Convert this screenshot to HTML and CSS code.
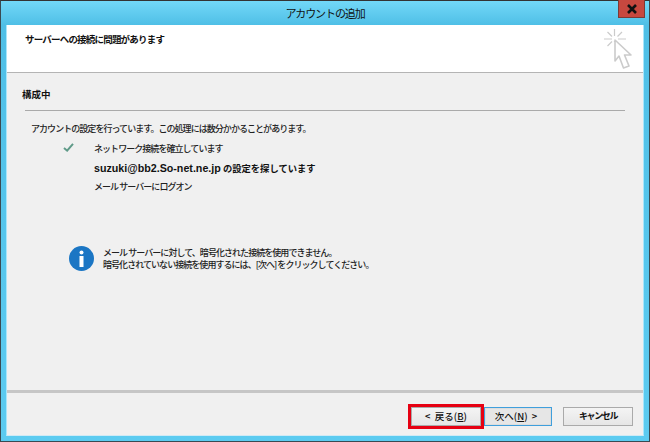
FILE: index.html
```html
<!DOCTYPE html>
<html lang="ja">
<head>
<meta charset="utf-8">
<title>アカウントの追加</title>
<link rel="stylesheet" href="styles.css">
</head>
<body>
<div class="window">
  <div class="titlebar">
    <span class="title">アカウントの追加</span>
    <button class="close" aria-label="閉じる">
      <svg width="12" height="10" viewBox="0 0 12 10"><path d="M2 1l8 8M10 1l-8 8" stroke="#111" stroke-width="2.600" fill="none"/></svg>
    </button>
  </div>
  <div class="client">
    <header class="head">
      <h1 class="head-title">サーバーへの接続に問題があります</h1>
      <svg class="wizard" width="28" height="40" viewBox="0 0 28 40">
        <path d="M10.500 0v7M10.500 12v1M0 10h8M14 10h8M3.500 3l4.500 4.500M18 3l-4.500 4.500M3.500 17l4.500-4.500" stroke="#cbcbcb" stroke-width="1.200" fill="none"/>
        <path d="M11 11v21l4-5 4.500 12 5.500-2-4.500-11h6.500z" fill="#fff" stroke="#cbcbcb" stroke-width="1.600" stroke-linejoin="round"/>
      </svg>
    </header>
    <main class="body">
      <h2 class="section">構成中</h2>
      <p class="lead">アカウントの設定を行っています。この処理には数分かかることがあります。</p>
      <ul class="steps">
        <li class="step">
          <svg class="check" width="11" height="9" viewBox="0 0 12 10"><path d="M1 5.500l3.500 3L11 1" stroke="#5f9a88" stroke-width="2.200" fill="none"/></svg>
          <span>ネットワーク接続を確立しています</span>
        </li>
        <li class="step current"><span class="mail">suzuki@bb2.So-net.ne.jp</span> の設定を探しています</li>
        <li class="step"><span>メール サーバーにログオン</span></li>
      </ul>
      <div class="notice">
        <svg class="info" width="25" height="25" viewBox="0 0 25 25">
          <circle cx="12.500" cy="12.500" r="12.500" fill="#1b76c4"/>
          <circle cx="12.500" cy="6.500" r="2" fill="#fff"/>
          <rect x="10.500" y="10" width="4" height="11" fill="#fff"/>
        </svg>
        <p class="notice-text">メール サーバーに対して、暗号化された接続を使用できません。<br>暗号化されていない接続を使用するには、[次へ] をクリックしてください。</p>
      </div>
    </main>
    <footer class="foot">
      <button class="btn back">&lt;&nbsp; 戻る(<u>B</u>)</button>
      <button class="btn next">次へ(<u>N</u>)&nbsp; &gt;</button>
      <button class="btn cancel">キャンセル</button>
    </footer>
  </div>
</div>
</body>
</html>
```
FILE: styles.css
```css
* { box-sizing: border-box; }
html, body { margin: 0; padding: 0; }
body {
  width: 650px;
  height: 442px;
  overflow: hidden;
  font-family: "Noto Sans CJK JP", "Liberation Sans", sans-serif;
  font-size: 9px;
  letter-spacing: -0.95px;
  font-weight: 500;
  color: #222;
}
.window {
  width: 650px;
  height: 442px;
  display: flex;
  flex-direction: column;
  border: 1px solid #3a4a52;
  border-top-color: #333;
  background: linear-gradient(180deg, #72d8f8 0, #4fbfe6 24px, #58c8ee 300px, #5ccbf0 100%);
  padding: 0 5px 5px 5px;
}
.titlebar {
  height: 24px;
  flex: none;
  display: flex;
  align-items: center;
  justify-content: center;
  position: relative;
}
.title { font-size: 11px; letter-spacing: -1.1px; font-weight: 400; color: #111; }
.close {
  position: absolute;
  top: -1px;
  right: -1px;
  width: 27px;
  height: 18px;
  margin: 0;
  padding: 0;
  display: flex;
  align-items: center;
  justify-content: center;
  background: #c7483f;
  border: 1px solid #7c3a35;
  border-top: 0;
}
.client {
  flex: 1;
  display: flex;
  flex-direction: column;
  background: #f0f0f0;
  border-left: 1px solid #a8e6fb;
  border-right: 1px solid #a8e6fb;
  border-bottom: 1px solid #cfeaf5;
  min-height: 0;
}
.head {
  height: 48px;
  flex: none;
  display: flex;
  justify-content: space-between;
  background: #fff;
  border-bottom: 1px solid #b4b4b4;
  padding: 8px 11px 0 18px;
}
.head-title { margin: 0; font-size: 9.500px; letter-spacing: -0.8px; font-weight: 700; line-height: 13px; color: #111; }
.wizard { margin-top: -4px; }
.body { flex: 1; min-height: 0; padding: 14px 18px 0 15px; }
.section {
  margin: 0;
  height: 24px;
  font-size: 9.500px;
  letter-spacing: 0;
  font-weight: 700;
  line-height: 14px;
  color: #111;
  background: linear-gradient(#aaa, #aaa) 3px 23px / 100% 1px no-repeat;
}
.lead { margin: 11px 0 0 9px; line-height: 14px; }
.steps { list-style: none; margin: 4px 0 0; padding: 0 0 0 72px; }
.step { height: 19px; line-height: 14px; padding-top: 2px; position: relative; }
.current { font-weight: 700; color: #111; font-size: 9.300px; letter-spacing: 0; }
.mail { font-family: "Liberation Sans", sans-serif; font-size: 10.700px; }
.check { position: absolute; left: -31px; top: 3px; }
.notice { display: flex; align-items: center; gap: 9px; margin: 49px 0 0 47px; }
.notice-text { margin: 0; line-height: 12px; }
.foot {
  height: 45px;
  flex: none;
  display: flex;
  justify-content: flex-end;
  align-items: flex-start;
  border-top: 3px solid #c6c6c6;
  padding: 14px 10px 0 0;
}
.btn {
  height: 19px;
  margin: 0;
  padding: 0 0 2px;
  font: inherit;
  font-size: 9.500px;
  letter-spacing: 0;
  color: #111;
  line-height: 14px;
  background: linear-gradient(#f4f4f4, #e6e6e6);
  border: 1px solid #aaa;
}
.back { width: 70px; outline: 3px solid #e60012; outline-offset: 0; }
.next { width: 68px; margin-left: 3px; padding-right: 4px; border: 1px solid #3f9fdc; background: #e6e6e6; box-shadow: inset 0 0 0 1px #ddd; }
.cancel { width: 70px; margin-left: 11px; font-size: 9px; letter-spacing: -1.400px; font-weight: 700; }
```
